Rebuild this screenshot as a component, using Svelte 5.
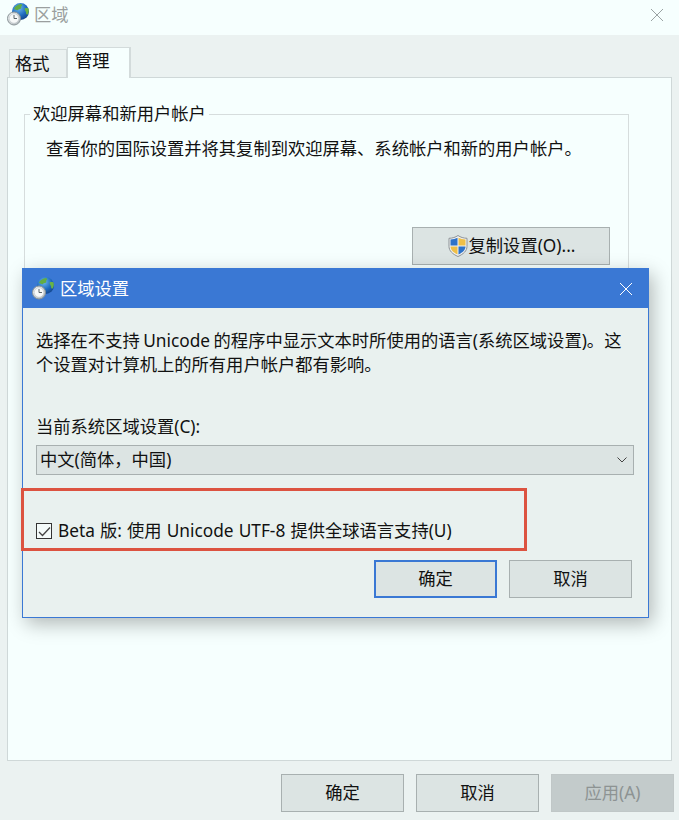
<script>
  let beta = $state(true);
  let locale = $state('zh-CN');
</script>

{#snippet globe(id)}
  <svg class="globe" width="24" height="24" viewBox="0 0 24 24" aria-hidden="true">
    <defs>
      <radialGradient id="sea{id}" cx="0.4" cy="0.3" r="0.8">
        <stop offset="0" stop-color="#6db7ec" />
        <stop offset="0.55" stop-color="#1f6cc0" />
        <stop offset="1" stop-color="#0f3a80" />
      </radialGradient>
      <linearGradient id="face{id}" x1="0" y1="0" x2="1" y2="1">
        <stop offset="0" stop-color="#f4f6f6" />
        <stop offset="1" stop-color="#a9b2b6" />
      </linearGradient>
    </defs>
    <circle cx="13.500" cy="8.500" r="8.500" fill="url(#sea{id})" />
    <path d="M7 5.500c1.500-2.500 4-4.300 7-4.500 1.500.5 1.500 1.500.3 2.200-.3 1 .4 1.600-.5 2.600-1.300.4-2.300.4-3 1.400-1.300-.2-2.800-.6-3.800-1.700z" fill="#62ad44" />
    <path d="M17.500 5.500c1.200-.6 2.800-.5 4-.1.700 2 .3 4.500-1.100 6.300-1-.4-1.500-1.200-1.300-2.300-.7-1.100-1.300-2.400-1.600-3.900z" fill="#69b446" />
    <circle cx="7" cy="15.500" r="6.500" fill="url(#face{id})" stroke="#8b9498" stroke-width="1" />
    <circle cx="7" cy="15.500" r="4.700" fill="#f7f9f9" stroke="#c4cacc" stroke-width=".6" />
    <path d="M7 12v3.500h3" fill="none" stroke="#5c666b" stroke-width="1" />
  </svg>
{/snippet}

<div class="window">
  <header class="titlebar">
    {@render globe('a')}
    <span class="title">区域</span>
    <svg class="close" width="14" height="14" viewBox="0 0 14 14" aria-hidden="true">
      <path d="M1 1l12 12M13 1L1 13" stroke="#9aa3a3" stroke-width="1" fill="none" />
    </svg>
  </header>

  <div class="content">
    <div class="tabs">
      <div class="tab">格式</div>
      <div class="tab tab--active">管理</div>
    </div>

    <div class="panel">
      <fieldset class="group">
        <legend>欢迎屏幕和新用户帐户</legend>
        <p class="group__text">查看你的国际设置并将其复制到欢迎屏幕、系统帐户和新的用户帐户。</p>
        <div class="group__actions">
          <button class="btn btn--copy" type="button">
            <svg width="22" height="24" viewBox="0 0 22 24" aria-hidden="true">
              <path d="M11 1.500c2.500 1.800 5.500 2.700 9 2.800v8c0 4.500-3.500 7.800-9 10.200-5.500-2.400-9-5.700-9-10.200v-8c3.500-.1 6.500-1 9-2.800z" fill="#f1f2f2" stroke="#8d9296" stroke-width="1" />
              <path d="M10.500 3.700v7.800H3.500V5.500c2.600-.2 4.900-.8 7-1.800z" fill="#2f73c9" />
              <path d="M11.500 3.700c2.100 1 4.400 1.600 7 1.800v6h-7z" fill="#efbf48" />
              <path d="M3.500 12.500h7v8c-4.300-2-7-4.800-7-8z" fill="#efbf48" />
              <path d="M11.500 12.500h7c0 3.200-2.700 6-7 8z" fill="#2f73c9" />
            </svg>
            <span>复制设置(O)...</span>
          </button>
        </div>
      </fieldset>
    </div>

    <div class="footer">
      <button class="btn" type="button">确定</button>
      <button class="btn" type="button">取消</button>
      <button class="btn" type="button" disabled>应用(A)</button>
    </div>
  </div>

  <div class="dialog">
    <header class="dialog__bar">
      {@render globe('b')}
      <span class="dialog__title">区域设置</span>
      <svg class="dialog__close" width="14" height="14" viewBox="0 0 14 14" aria-hidden="true">
        <path d="M1 1l12 12M13 1L1 13" stroke="#fff" stroke-width="1" fill="none" />
      </svg>
    </header>
    <div class="dialog__body">
      <p class="dialog__text">选择在不支持 Unicode 的程序中显示文本时所使用的语言(系统区域设置)。这<br />个设置对计算机上的所有用户帐户都有影响。</p>
      <label class="select-field">
        <span>当前系统区域设置(C):</span>
        <span class="select-wrap">
          <select bind:value={locale}>
            <option value="zh-CN">中文(简体，中国)</option>
          </select>
          <svg width="10" height="6" viewBox="0 0 10 6" aria-hidden="true">
            <path d="M.5.500L5 5 9.500.500" stroke="#444" stroke-width="1" fill="none" />
          </svg>
        </span>
      </label>
      <label class="check">
        <input type="checkbox" bind:checked={beta} />
        <span class="check__box">
          {#if beta}
            <svg width="13" height="11" viewBox="0 0 13 11" aria-hidden="true">
              <path d="M1 6l3.500 3.500L12 1.500" stroke="#444" stroke-width="1.300" fill="none" />
            </svg>
          {/if}
        </span>
        <span class="check__label">Beta 版: 使用 Unicode UTF-8 提供全球语言支持(U)</span>
      </label>
      <div class="dialog__actions">
        <button class="btn btn--default" type="button">确定</button>
        <button class="btn" type="button">取消</button>
      </div>
    </div>
    <div class="annotation"></div>
  </div>
</div>

<style>
  :global(body) {
    margin: 0;
    background: #ebf2f1;
  }

  .window {
    position: relative;
    width: 679px;
    height: 820px;
    overflow: hidden;
    font-family: "Noto Sans", "Noto Sans CJK SC", sans-serif;
    font-size: 17.3px;
    line-height: 24px;
    color: #111;
    background: #ebf2f1;
  }

  .titlebar {
    display: flex;
    align-items: center;
    height: 35px;
    padding: 0 15px 6px 7px;
    background: #f6fffe;
    box-sizing: border-box;
  }

  .title {
    margin-left: 3px;
    color: #9b9f9f;
  }

  .close {
    margin-left: auto;
  }

  .content {
    padding: 12px 7px 0;
  }

  .tabs {
    display: flex;
    align-items: flex-end;
    height: 30px;
    padding-left: 2px;
  }

  .tab {
    box-sizing: border-box;
    width: 58px;
    height: 28px;
    border: 1px solid #d3dbdb;
    border-bottom: 0;
    padding-left: 5px;
    line-height: 28px;
  }

  .tab--active {
    position: relative;
    z-index: 1;
    width: 64px;
    height: 31px;
    margin-bottom: -1px;
    border-width: 1px 2px 0 1px;
    background: #f6fffe;
    padding-left: 7px;
    line-height: 26px;
  }

  .panel {
    box-sizing: border-box;
    height: 684px;
    border: 1px solid #cfd8d8;
    background: #f6fffe;
    padding: 24px 42px 0 16px;
  }

  .group {
    margin: 0;
    height: 300px;
    padding: 0 18px 0 21px;
    border: 1px solid #d6dddd;
    min-width: 0;
  }

  .group legend {
    margin-left: -16px;
    padding: 0 3px;
    line-height: 24px;
  }

  .group__text {
    margin: 11px 0 0;
    white-space: nowrap;
  }

  .group__actions {
    display: flex;
    justify-content: flex-end;
    margin-top: 66px;
  }

  .btn {
    box-sizing: border-box;
    width: 123px;
    height: 38px;
    padding: 0;
    border: 1px solid #a8b0b0;
    border-radius: 0;
    background: #dce4e3;
    color: #111;
    font: inherit;
  }

  .btn:disabled {
    background: #c3cbcb;
    border-color: #c0c7c7;
    color: #8d9393;
  }

  .btn--copy {
    display: flex;
    align-items: center;
    justify-content: center;
    width: 198px;
  }

  .btn--default {
    border: 2px solid #3a78d4;
  }

  .footer {
    display: flex;
    justify-content: flex-end;
    gap: 12px;
    margin: 13px -2px 0 0;
  }

  .dialog {
    position: absolute;
    left: 22px;
    top: 268px;
    width: 627px;
    height: 350px;
    box-sizing: border-box;
    border: 1px solid #3a78d4;
    background: #e9f1ef;
    box-shadow: 4px 6px 18px rgba(0, 0, 0, 0.28);
  }

  .dialog__bar {
    display: flex;
    align-items: center;
    box-sizing: border-box;
    height: 40px;
    margin: -1px -1px 0;
    padding: 2px 16px 0 10px;
    background: #3a78d4;
    color: #fff;
  }

  .dialog__title {
    margin-left: 4px;
  }

  .dialog__close {
    margin-left: auto;
  }

  .dialog__body {
    padding: 21px 14px 0 13px;
  }

  .dialog__text {
    margin: 0;
    white-space: nowrap;
    word-spacing: -1px;
  }

  .select-field {
    display: flex;
    flex-direction: column;
    gap: 6px;
    margin-top: 38px;
  }

  .select-wrap {
    position: relative;
    display: block;
  }

  .select-wrap svg {
    position: absolute;
    right: 7px;
    top: 12px;
    pointer-events: none;
  }

  select {
    display: block;
    box-sizing: border-box;
    width: 100%;
    height: 30px;
    padding: 0 0 0 3px;
    border: 1px solid #a8b0b0;
    border-radius: 0;
    appearance: none;
    background: #dce4e3;
    color: #111;
    font: inherit;
  }

  .check {
    display: flex;
    align-items: center;
    gap: 6px;
    margin-top: 44px;
    height: 24px;
  }

  .check input {
    position: absolute;
    opacity: 0;
    width: 0;
    height: 0;
  }

  .check__box {
    display: flex;
    align-items: center;
    justify-content: center;
    box-sizing: border-box;
    width: 16px;
    height: 16px;
    border: 1px solid #333;
    background: #f4fbfa;
  }

  .check__label {
    word-spacing: 0.6px;
  }

  .dialog__actions {
    display: flex;
    justify-content: flex-end;
    gap: 12px;
    margin-top: 17px;
    margin-right: 2px;
  }

  .annotation {
    position: absolute;
    left: -2px;
    top: 219px;
    width: 506px;
    height: 63px;
    box-sizing: border-box;
    border: 3px solid #dc5340;
    pointer-events: none;
  }
</style>
